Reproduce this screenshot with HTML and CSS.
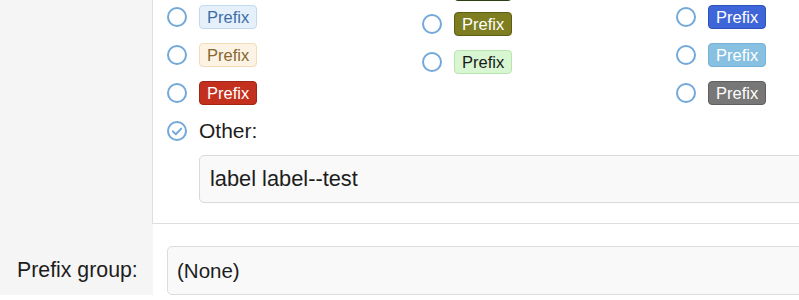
FILE: index.html
```html
<!DOCTYPE html>
<html>
<head>
<meta charset="utf-8">
<link rel="stylesheet" href="styles.css">
</head>
<body>
<div class="form">
  <div class="row">
    <div class="label-cell"></div>
    <div class="field-cell bordered">
      <div class="choices">
        <ul class="col col1">
          <li class="choice"><svg class="radio" viewBox="0 0 20 20"><circle cx="10" cy="10" r="9"/></svg><span class="tag tag-info">Prefix</span></li>
          <li class="choice"><svg class="radio" viewBox="0 0 20 20"><circle cx="10" cy="10" r="9"/></svg><span class="tag tag-warn">Prefix</span></li>
          <li class="choice"><svg class="radio" viewBox="0 0 20 20"><circle cx="10" cy="10" r="9"/></svg><span class="tag tag-red">Prefix</span></li>
        </ul>
        <ul class="col col2">
          <li class="choice first"><svg class="radio" viewBox="0 0 20 20"><circle cx="10" cy="10" r="9"/></svg><span class="tag tag-green">Prefix</span></li>
          <li class="choice"><svg class="radio" viewBox="0 0 20 20"><circle cx="10" cy="10" r="9"/></svg><span class="tag tag-olive">Prefix</span></li>
          <li class="choice"><svg class="radio" viewBox="0 0 20 20"><circle cx="10" cy="10" r="9"/></svg><span class="tag tag-lightgreen">Prefix</span></li>
        </ul>
        <ul class="col col3">
          <li class="choice"><svg class="radio" viewBox="0 0 20 20"><circle cx="10" cy="10" r="9"/></svg><span class="tag tag-blue">Prefix</span></li>
          <li class="choice"><svg class="radio" viewBox="0 0 20 20"><circle cx="10" cy="10" r="9"/></svg><span class="tag tag-sky">Prefix</span></li>
          <li class="choice"><svg class="radio" viewBox="0 0 20 20"><circle cx="10" cy="10" r="9"/></svg><span class="tag tag-grey">Prefix</span></li>
        </ul>
      </div>
      <div class="choice other"><svg class="radio" viewBox="0 0 20 20"><circle cx="10" cy="10" r="9"/><path d="M5.8 10.4 L8.8 13.3 L14.3 7.6"/></svg><span class="other-label">Other:</span></div>
      <div class="text-input">label label--test</div>
    </div>
  </div>
  <div class="row">
    <div class="label-cell wide"><label class="field-label">Prefix group:</label></div>
    <div class="field-cell">
      <div class="select">(None)</div>
    </div>
  </div>
</div>
</body>
</html>
```

FILE: styles.css
```css
html, body {
  margin: 0;
  padding: 0;
  background: #fff;
  overflow: hidden;
}
body {
  width: 799px;
  height: 300px;
  font-family: "Liberation Sans", Arial, Helvetica, sans-serif;
  color: #1d1d1d;
}
.form {
  margin-top: -2px;
}
.row {
  display: flex;
}
.label-cell {
  width: 152px;
  flex: none;
  background: #f5f5f5;
}
.label-cell.wide {
  width: 153px;
}
.field-cell {
  flex: 1;
  min-width: 0;
  padding-left: 14px;
  overflow: hidden;
}
.field-cell.bordered {
  border-left: 1px solid #dedede;
  border-bottom: 1px solid #dedede;
  padding-bottom: 20px;
}
.choices {
  display: grid;
  grid-template-columns: 255px 254px 1fr;
  align-items: start;
}
.col {
  list-style: none;
  margin: 0;
  padding: 0;
}
.col2 {
  margin-top: -24px;
}
.choice {
  height: 38px;
  display: flex;
  align-items: center;
}
.col2 .choice {
  height: 38.5px;
}
.col2 .choice.first {
  height: 30.5px;
}
.radio {
  width: 20px;
  height: 20px;
  flex: none;
  margin-right: 12px;
  fill: none;
  stroke: #72a8da;
  stroke-width: 2;
  stroke-linecap: round;
  stroke-linejoin: round;
}
.tag {
  display: inline-block;
  box-sizing: border-box;
  height: 24px;
  line-height: 22px;
  padding: 0 7px;
  border: 1px solid;
  border-radius: 4px;
  font-size: 16.5px;
}
.tag-info { background: #e6f0fb; border-color: #c2d8ef; color: #3b6ea8; }
.tag-warn { background: #fdf3e4; border-color: #f1dbb8; color: #86672f; }
.tag-red { background: #c4301e; border-color: #a32516; color: #fff; }
.tag-green { background: #3d5a1c; border-color: #2a4010; color: #fff; }
.tag-olive { background: #7e7d20; border-color: #5e5d14; color: #fff; }
.tag-lightgreen { background: #d8f6d2; border-color: #b6e6ae; color: #1a1a1a; }
.tag-blue { background: #3f66d8; border-color: #2f52ba; color: #fff; }
.tag-sky { background: #87c0e0; border-color: #74b2d8; color: #fff; }
.tag-grey { background: #777; border-color: #5f5f5f; color: #fff; }
.other-label {
  font-size: 21px;
}
.text-input {
  margin-top: 5px;
  margin-left: 32px;
  box-sizing: border-box;
  width: 640px;
  height: 48px;
  line-height: 46px;
  padding-left: 10px;
  border: 1px solid #d9d9d9;
  border-radius: 5px;
  background: #f9f9f9;
  font-size: 21.8px;
  white-space: nowrap;
}
.field-label {
  display: block;
  padding-top: 22px;
  padding-left: 17px;
  line-height: 49px;
  font-size: 21.3px;
}
.row .field-cell:not(.bordered) {
  padding-top: 22px;
}
.select {
  box-sizing: border-box;
  width: 700px;
  height: 49px;
  line-height: 47px;
  padding-left: 9px;
  border: 1px solid #dcdcdc;
  border-radius: 5px;
  background: #f9f9f9;
  font-size: 20.5px;
  white-space: nowrap;
}
```
